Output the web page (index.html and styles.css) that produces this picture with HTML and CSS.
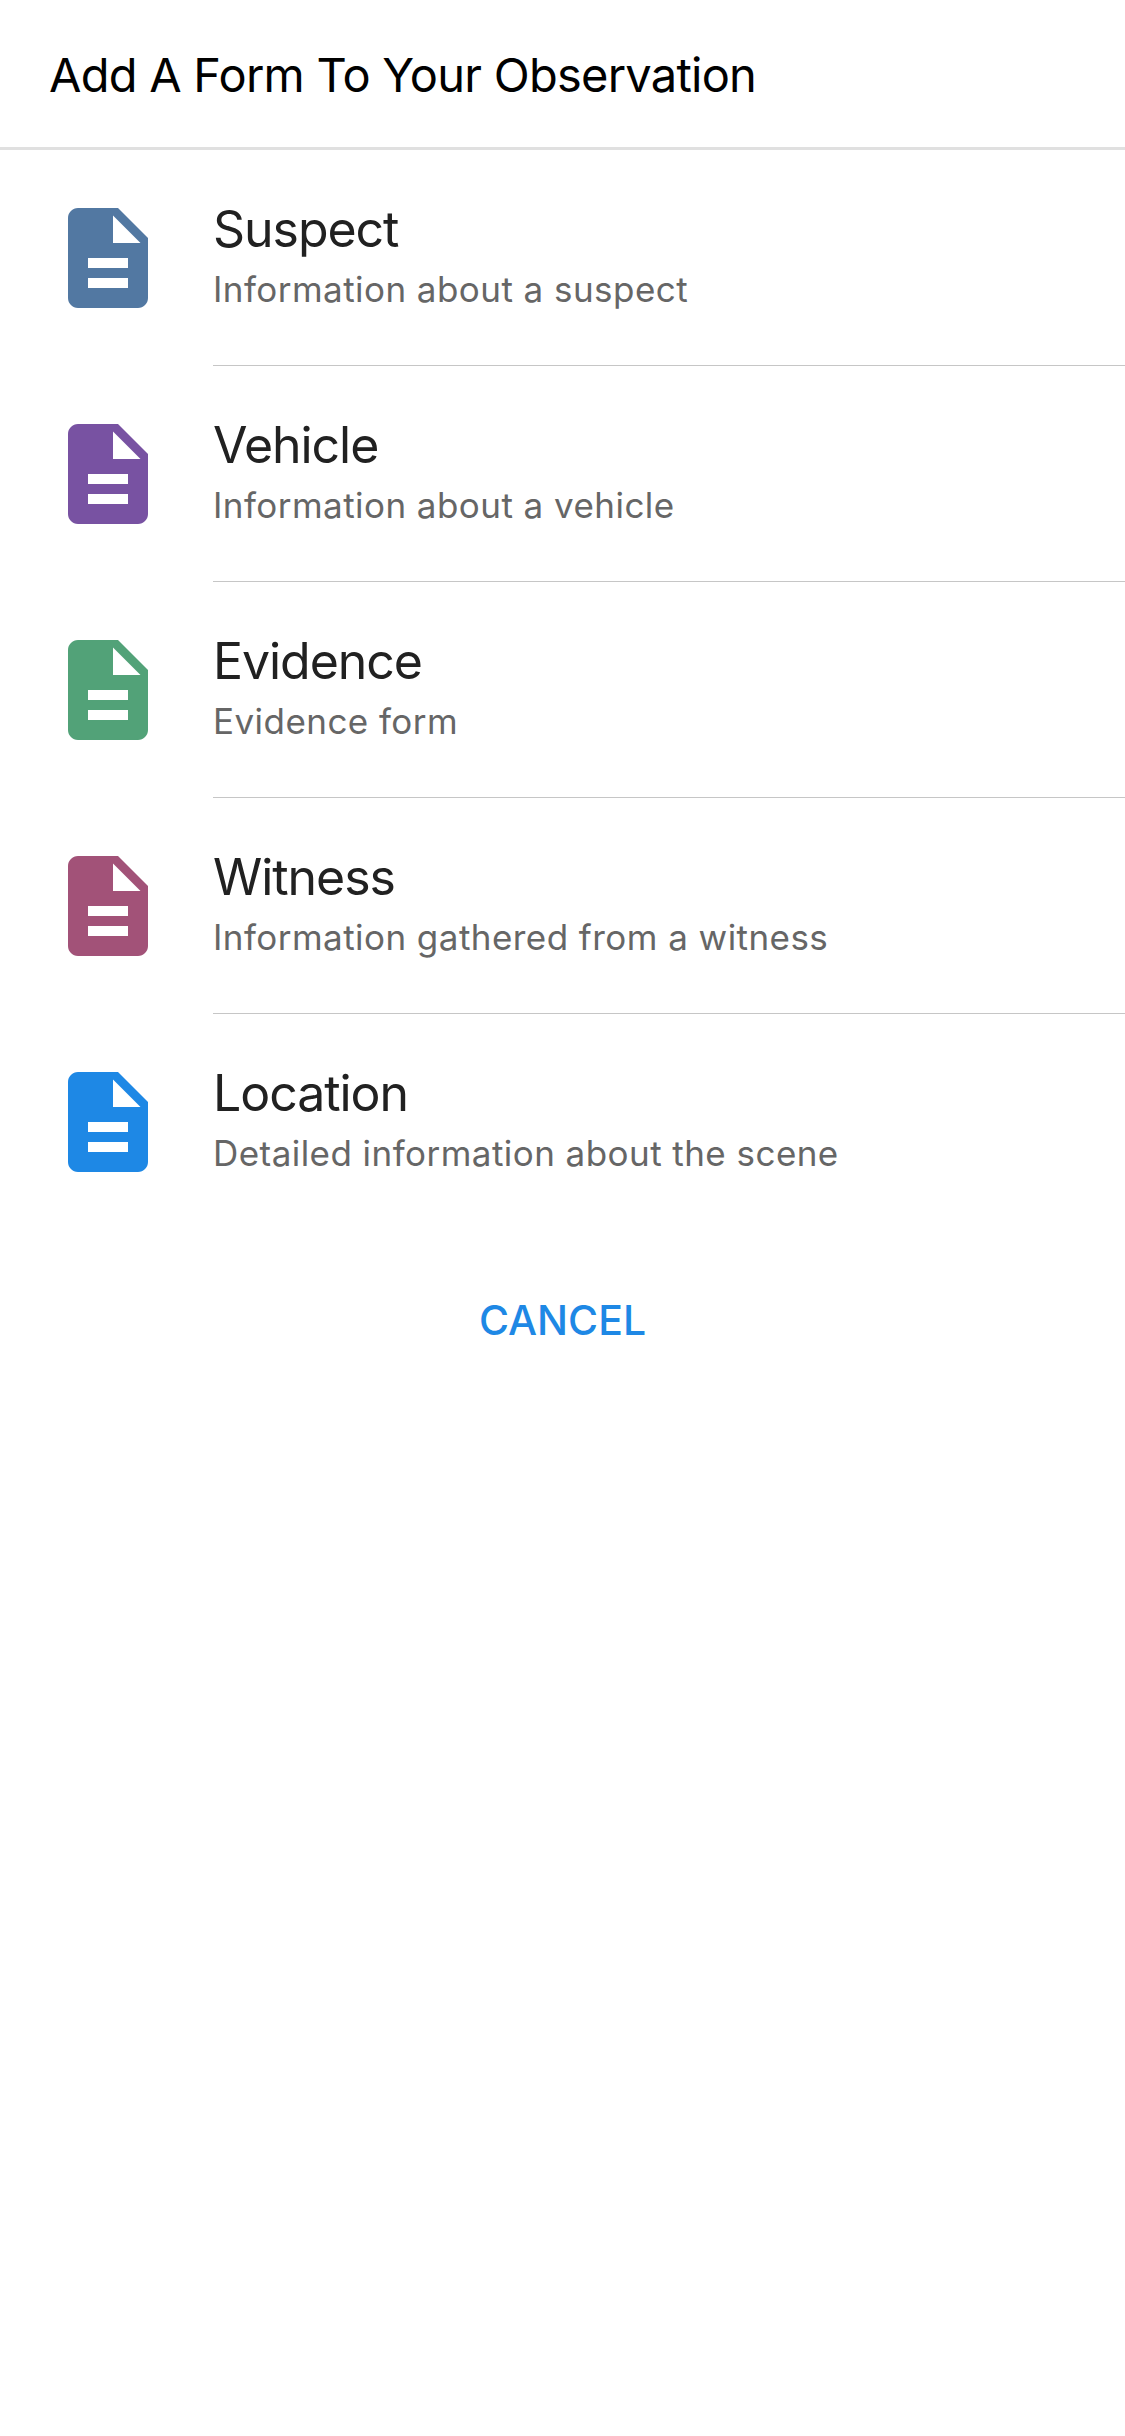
FILE: index.html
```html
<!DOCTYPE html>
<html lang="en">
<head>
<meta charset="utf-8">
<title>Add A Form To Your Observation</title>
<link rel="stylesheet" href="styles.css">
</head>
<body>
<svg class="sprite" aria-hidden="true">
  <symbol id="form" viewBox="4 2 16 20"><path d="M14 2H6c-1.100 0-2 .9-2 2v16c0 1.100.9 2 2 2h12c1.100 0 2-.9 2-2V8l-6-6zm2 16H8v-2h8v2zm0-4H8v-2h8v2zm-3-5V3.500L18.500 9H13z"/></symbol>
</svg>
<header class="header"><h1 class="title">Add A Form To Your Observation</h1></header>
<ul class="forms">
  <li class="form suspect"><svg class="icon"><use href="#form"/></svg><div class="body"><h2 class="name">Suspect</h2><p class="desc">Information about a suspect</p></div></li>
  <li class="form vehicle"><svg class="icon"><use href="#form"/></svg><div class="body"><h2 class="name">Vehicle</h2><p class="desc">Information about a vehicle</p></div></li>
  <li class="form evidence"><svg class="icon"><use href="#form"/></svg><div class="body"><h2 class="name">Evidence</h2><p class="desc">Evidence form</p></div></li>
  <li class="form witness"><svg class="icon"><use href="#form"/></svg><div class="body"><h2 class="name">Witness</h2><p class="desc">Information gathered from a witness</p></div></li>
  <li class="form location"><svg class="icon"><use href="#form"/></svg><div class="body"><h2 class="name">Location</h2><p class="desc">Detailed information about the scene</p></div></li>
</ul>
<button class="cancel" type="button">CANCEL</button>
</body>
</html>
```
FILE: styles.css
```css
* { box-sizing: border-box; margin: 0; padding: 0; }
body { background: #fff; font-family: Inter, "Liberation Sans", sans-serif; min-height: 2436px; }
.sprite { display: none; }
.header { height: 150px; padding: 45px 49px 0; border-bottom: 3px solid #e0e0e0; }
.title { font-size: 47px; line-height: 60px; font-weight: 400; color: #000; letter-spacing: -0.75px; white-space: nowrap; }
.forms { list-style: none; }
.form { display: flex; height: 216px; padding-left: 68px; }
.icon { width: 80px; height: 100px; margin: 58px 65px 0 0; flex: none; fill: currentColor; }
.body { flex: 1; padding-top: 48px; border-bottom: 1px solid #c6c6c6; white-space: nowrap; }
.form:last-child .body { border-bottom: 0; }
.name { font-size: 50px; line-height: 62px; font-weight: 400; color: #212121; letter-spacing: -1.05px; }
.desc { font-size: 35px; line-height: 44px; margin-top: 7px; color: #666; letter-spacing: 0.45px; }
.suspect { color: #5278a2; }
.vehicle { color: #7852a2; }
.evidence { color: #52a278; }
.witness { color: #a25278; }
.location { color: #1e88e5; }
.cancel { display: block; margin: 58px auto 0; border: 0; background: none; font: 500 41px/64px Inter, "Liberation Sans", sans-serif; color: #1e88e5; }
```
